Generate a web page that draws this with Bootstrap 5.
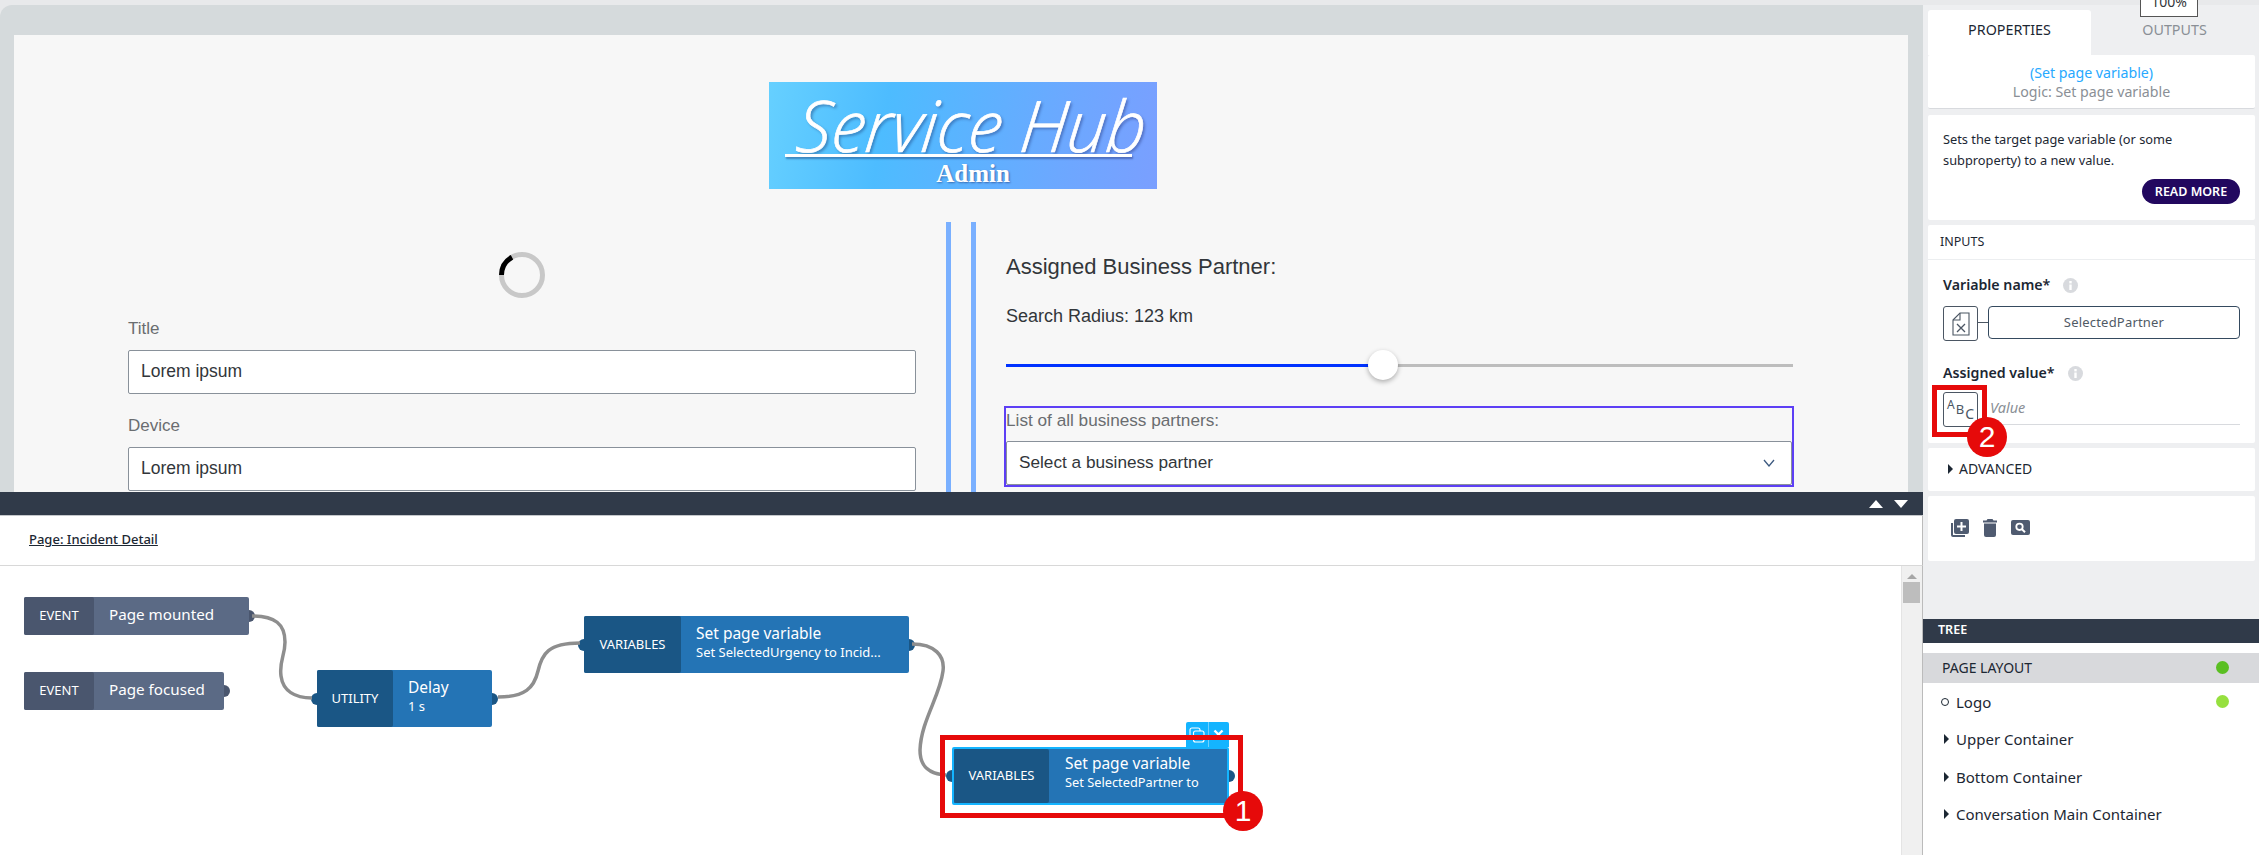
<!DOCTYPE html>
<html lang="en">
<head>
  <meta charset="UTF-8" />
  <title>Incident Detail</title>
  <link href="https://cdn.jsdelivr.net/npm/bootstrap@5.3.0/dist/css/bootstrap.min.css" rel="stylesheet" />
  <style>
    html, body { height: 100%; overflow: hidden; }
    body { font-family: "Noto Sans", "Liberation Sans", sans-serif; background: #e8e9eb; padding-top: 5px; color: #1c2733; }

    /* left side */
    .left-side { width: 1923px; }
    .stage { height: 487px; background: #d5dadc; border-top-left-radius: 12px; padding: 30px 15px 0 14px; overflow: hidden; }
    .stage-page { height: 457px; background: #f7f7f7; overflow: hidden; font-family: "Liberation Sans", sans-serif; }
    .logo-box { position: relative; width: 388px; height: 107px; margin: 47px 0 33px 755px; background: linear-gradient(100deg, #66d0ff 0%, #4dbcff 30%, #6ca8ff 75%, #7a9fff 100%); color: #fff; }
    .logo-main { position: absolute; left: 25px; top: 8px; font: italic 300 69px/70px "Open Sans", sans-serif; -webkit-text-stroke: .7px #fff; white-space: nowrap; transform-origin: left bottom; transform: skewX(-6deg) scaleY(1.03); text-shadow: 2px 2px 3px rgba(0,0,60,.35); }
    .logo-rule { position: absolute; left: 16px; top: 72px; width: 347px; height: 3px; background: #fff; box-shadow: 1px 2px 2px rgba(0,0,60,.35); }
    .logo-sub { position: absolute; left: 0; width: 100%; top: 78px; text-align: center; padding-left: 20px; font: bold 25px/28px "Liberation Serif", serif; text-shadow: 1px 1px 2px rgba(0,0,60,.4); }
    .form-side { width: 823px; margin-left: 114px; padding-right: 30px; border-right: 5px solid #7ab0ff; margin-right: 20px; }
    .partner-side { width: 823px; border-left: 5px solid #7ab0ff; padding-left: 30px; }
    .load-ring { display: block; margin: 30px auto 20px; }
    .page-label { font-size: 17px; line-height: 22px; color: #6a6d70; margin-bottom: 10px; }
    .page-input.form-control, .page-select.form-select { height: 44px; font-size: 17.5px; color: #32363a; border: 1px solid #89919a; border-radius: 2px; padding: 0 12px; background-color: #fff; box-shadow: none; }
    .page-input.form-control { margin-bottom: 21px; padding-bottom: 2px; }
    .partner-title { font-size: 22px; line-height: 28px; color: #32363a; margin: 31px 0 22px; }
    .radius-label { font-size: 18px; line-height: 26px; color: #32363a; margin-bottom: 21px; }
    .radius-range.form-range { display: block; width: 787px; height: 30px; margin-bottom: 26px; }
    .radius-range.form-range::-webkit-slider-runnable-track { height: 3px; border-radius: 0; background: linear-gradient(90deg, #0032ff 47.9%, #bdbdbd 47.9%); }
    .radius-range.form-range::-webkit-slider-thumb { width: 30px; height: 30px; margin-top: -13.5px; background: #fff; border: 0; box-shadow: 0 2px 5px rgba(0,0,0,.3); }
    .partner-pick { width: 790px; height: 81px; margin-left: -2px; border: 2px solid #5d3ff5; }
    .partner-pick label { display: block; font-size: 17.2px; line-height: 22px; color: #6a6d70; margin: 1px 0 10px; }
    .page-select.form-select { width: 786px; background-image: none; font-size: 17.2px; }
    .select-wrap { position: relative; }
    .select-wrap svg { position: absolute; right: 17px; top: 18px; }

    /* logic canvas */
    .logic-pane { height: 363px; background: #fff; position: relative; }
    .logic-bar { height: 24px; background: #303a49; border-bottom: 1px solid #c4c7cb; position: relative; }
    .logic-bar svg { position: absolute; top: 8px; }
    .arrow-up { left: 1869px; }
    .arrow-down { left: 1894px; }
    .logic-head { height: 50px; padding: 14px 0 0 29px; font-size: 13px; line-height: 18px; font-weight: 500; border-bottom: 1px solid #d8d8d8; border-right: 1px solid #bbb; }
    .logic-head a { color: #1c2733; }
    .logic-body { height: 289px; }
    .logic-canvas { position: relative; z-index: 0; flex: 1 1 auto; }
    .logic-scroll { width: 22px; background: #f0f0f0; border-left: 1px solid #e4e4e4; border-right: 1px solid #bbb; padding: 8px 2px 0 1px; }
    .logic-scroll i { display: block; width: 0; height: 0; margin: 0 auto 3px; border: 5px solid transparent; border-top: 0; border-bottom-color: #a6a6a6; }
    .logic-scroll b { display: block; height: 21px; background: #bdbdbd; }
    .wires { position: absolute; left: 0; top: 0; width: 1300px; height: 289px; }
    .wires path { fill: none; stroke: #8e8e8e; stroke-width: 3.5; }
    .flow-node { position: absolute; display: flex; color: #fff; border-radius: 2px; }
    .flow-node .kind { display: flex; align-items: center; justify-content: center; font-size: 13px; border-radius: 2px; }
    .flow-node .info { flex: 1 1 auto; min-width: 0; display: flex; flex-direction: column; justify-content: center; white-space: nowrap; padding-bottom: 5px; }
    .flow-node .ttl { font-size: 15.5px; line-height: 20px; }
    .flow-node .sub { font-size: 13px; line-height: 18px; }
    .node-event { height: 38px; background: #5b6a85; }
    .node-event .kind { width: 70px; background: #4a566e; }
    .node-event .info { padding-left: 15px; }
    .node-event .ttl { font-size: 15.2px; }
    .node-blue { background: #2474b5; }
    .node-blue .kind { background: #1a5685; }
    .flow-port { position: absolute; z-index: -1; width: 12px; height: 12px; border-radius: 50%; }
    .node-event .flow-port { background: #4a566e; right: -6px; top: 13px; }
    .node-blue .flow-port { background: #1a5685; top: calc(50% - 6px); }
    .flow-port.in { left: -6px; }
    .flow-port.out { right: -6px; }
    #n-mounted { left: 24px; top: 31px; width: 225px; }
    #n-focused { left: 24px; top: 106px; width: 200px; }
    #n-delay { left: 317px; top: 104px; width: 175px; height: 57px; }
    #n-delay .kind { width: 76px; }
    #n-delay .info { padding-left: 15px; }
    #n-urgency { left: 584px; top: 50px; width: 325px; height: 57px; }
    #n-urgency .kind { width: 97px; }
    #n-urgency .info { padding-left: 15px; }
    #n-partner { left: 952px; top: 181px; width: 277px; height: 58px; border: 2px solid #14b4ff; }
    #n-partner .kind { width: 95px; }
    #n-partner .info { padding-left: 16px; padding-bottom: 8px; }
    #n-partner .sub { font-size: 12.8px; }
    #n-partner .flow-port.in { left: -8px; }
    #n-partner .flow-port.out { right: -8px; }
    .node-tools { position: absolute; left: 1186px; top: 156px; width: 43px; height: 25px; background: #14b4ff; border-radius: 2px 2px 0 0; display: flex; }
    .node-tools span { flex: 1 1 50%; display: flex; align-items: center; justify-content: center; }
    .node-tools span + span { border-left: 1px solid #6ed0ff; }
    .mark-box { position: absolute; border: 5px solid #e60a0a; }
    .mark-num { position: absolute; width: 40px; height: 40px; border-radius: 50%; background: #e60a0a; color: #fff; font: 30px/40px "Liberation Sans", sans-serif; text-align: center; z-index: 5; }
    #box-one { left: 940px; top: 169px; width: 303px; height: 83px; }
    #num-one { left: 1223px; top: 225px; }
    #box-two { left: 4px; top: 160px; width: 55px; height: 52px; }
    #num-two { left: 39px; top: 192px; }

    /* right side */
    .right-side { width: 336px; background: #eeeff1; position: relative; font-size: 14px; }
    .zoom-tag { position: absolute; left: 217px; top: -14px; width: 58px; height: 26px; background: #fff; border: 1px solid #555; text-align: center; font-size: 14px; line-height: 19px; color: #32363a; z-index: 3; }
    .prop-tabs { padding: 5px 0 0 5px; height: 50px; }
    .prop-tab { width: 163px; height: 45px; text-align: center; font-size: 14.3px; line-height: 40px; color: #1c2733; }
    .prop-tab.on { background: #fff; border-radius: 3px 3px 0 0; }
    .prop-tab.off { color: #8a8f96; padding-left: 4px; }
    .prop-stack { padding: 0 4px 0 5px; }
    .prop-panel { background: #fff; margin-bottom: 5px; border-radius: 2px; }
    #p-title { height: 54px; margin-bottom: 6px; border-bottom: 1px solid #d8dade; text-align: center; font-size: 14.2px; line-height: 19px; padding-top: 8px; width: 327px; }
    #p-title div:first-child { color: #27a9ff; }
    #p-title div:last-child { color: #8a8f96; }
    #p-about { height: 105px; padding: 14px 15px 0; font-size: 12.8px; line-height: 20.5px; }
    .read-btn.btn { display: block; margin: 9px 0 0 auto; width: 98px; height: 25px; padding: 0; background: #22085f; border: 0; border-radius: 13px; color: #fff; font-size: 12.5px; font-weight: 600; line-height: 25px; }
    #p-inputs { height: 218px; position: relative; }
    .inputs-head { height: 35px; padding: 7px 0 0 12px; font-size: 12.5px; line-height: 20px; border-bottom: 1px solid #eceef0; }
    .inputs-body { padding: 15px 15px 0; }
    .field-name { display: flex; align-items: center; gap: 13px; font-size: 14.2px; font-weight: 600; line-height: 20px; }
    .field-name svg { flex: none; }
    .bind-row { display: flex; align-items: flex-start; margin-top: 11px; margin-bottom: 22px; }
    .bind-icon { width: 35px; height: 35px; flex: none; background: #fff; border: 1px solid #4b5663; border-radius: 3px; display: flex; align-items: center; justify-content: center; }
    .bind-link { width: 10px; height: 1px; background: #4b5663; margin-top: 16px; }
    .bind-field { flex: 1 1 auto; height: 33px; border: 1px solid #354a5f; border-radius: 4px; text-align: center; font-size: 13px; line-height: 31px; color: #505a65; letter-spacing: .2px; }
    .value-row { display: flex; margin-top: 9px; }
    .value-input { flex: 1 1 auto; margin-left: 7px; height: 33px; border-bottom: 1px solid #d8dade; color: #8a8f96; font-style: italic; font-size: 14.5px; line-height: 31px; padding-left: 5px; }
    .abc { line-height: 1; color: #4b5663; display: flex; align-items: flex-end; height: 22px; }
    .abc span:nth-child(1) { align-self: flex-start; font-size: 12px; }
    .abc span:nth-child(2) { align-self: center; margin: 0 1px; font-size: 13px; }
    .abc span:nth-child(3) { font-size: 14px; }
    #p-adv { height: 43px; display: flex; align-items: center; padding: 0 0 2px 20px; gap: 6px; font-size: 14px; }
    .tri-right { display: inline-block; width: 0; height: 0; border-style: solid; border-width: 5px 0 5px 5px; border-color: transparent transparent transparent #1c2733; }
    #p-tools { height: 65px; display: flex; align-items: center; padding: 0 0 2px 23px; gap: 14px; }
    .tree-bar { margin-top: auto; height: 24px; background: #303a49; color: #fff; font-size: 12.5px; font-weight: 600; line-height: 21px; padding-left: 15px; }
    .tree-list { height: 212px; background: #fff; padding-top: 10px; }
    .tree-item { display: flex; align-items: center; position: relative; padding: 0 0 2px 33px; height: 37.5px; font-size: 15px; }
    .tree-item .tri-right, .tree-item .dot-open { position: absolute; left: 21px; }
    .tree-item .dot-open { width: 8px; height: 8px; border: 1.5px solid #1c2733; border-radius: 50%; left: 18px; }
    .tree-head { height: 30px; padding-left: 19px; background: #d8d9dc; font-size: 14px; margin-bottom: 1px; }
    .tree-dot { position: absolute; left: 293px; width: 13px; height: 13px; border-radius: 50%; }
    .dot-dark { background: #5abf22; }
    .dot-light { background: #96e03f; }
  </style>
</head>
<body>
  <div class="d-flex">
    <div class="left-side">
      <div class="stage">
        <div class="stage-page">
          <div class="logo-box">
            <div class="logo-main">Service Hub</div>
            <div class="logo-rule"></div>
            <div class="logo-sub">Admin</div>
          </div>
          <div class="d-flex">
            <div class="form-side">
              <svg class="load-ring" width="46" height="46" viewBox="0 0 46 46">
                <circle cx="23" cy="23" r="20.5" fill="none" stroke="#c8c8c8" stroke-width="5" />
                <path d="M2.5 23A20.5 20.5 0 0 1 13 5.2" fill="none" stroke="#000" stroke-width="5" />
              </svg>
              <div class="page-label">Title</div>
              <input class="form-control page-input" value="Lorem ipsum" />
              <div class="page-label">Device</div>
              <input class="form-control page-input" value="Lorem ipsum" />
            </div>
            <div class="partner-side">
              <div class="partner-title">Assigned Business Partner:</div>
              <div class="radius-label">Search Radius: 123 km</div>
              <input type="range" class="form-range radius-range" min="0" max="100" value="47.8" step="0.1" />
              <div class="partner-pick">
                <label>List of all business partners:</label>
                <div class="select-wrap">
                  <select class="form-select page-select"><option>Select a business partner</option></select>
                  <svg width="12" height="8" viewBox="0 0 12 8"><path d="M1 1l5 6 5-6" fill="none" stroke="#3d5a80" stroke-width="1.3" /></svg>
                </div>
              </div>
            </div>
          </div>
        </div>
      </div>

      <div class="logic-pane">
        <div class="logic-bar">
          <svg class="arrow-up" width="14" height="8" viewBox="0 0 14 8"><path d="M0 8L7 0l7 8z" fill="#fff" /></svg>
          <svg class="arrow-down" width="14" height="8" viewBox="0 0 14 8"><path d="M0 0l7 8 7-8z" fill="#fff" /></svg>
        </div>
        <div class="logic-head"><a href="#">Page: Incident Detail</a></div>
        <div class="d-flex logic-body">
          <div class="logic-canvas">
            <svg class="wires" viewBox="0 0 1300 289">
              <path d="M252 50C275 50 285 58 285 76C285 90 279 95 281 110C283 125 295 132 312 132" />
              <path d="M498 131C525 131 534 122 538 105C542 88 548 77 580 77" />
              <path d="M912 78C935 78 945 90 943 105C940 130 921 155 920 184C920 200 928 208 946 209" />
            </svg>

            <div class="flow-node node-event" id="n-mounted">
              <div class="kind">EVENT</div>
              <div class="info"><div class="ttl">Page mounted</div></div>
              <span class="flow-port"></span>
            </div>
            <div class="flow-node node-event" id="n-focused">
              <div class="kind">EVENT</div>
              <div class="info"><div class="ttl">Page focused</div></div>
              <span class="flow-port"></span>
            </div>
            <div class="flow-node node-blue" id="n-delay">
              <span class="flow-port in"></span>
              <div class="kind">UTILITY</div>
              <div class="info"><div class="ttl">Delay</div><div class="sub">1 s</div></div>
              <span class="flow-port out"></span>
            </div>
            <div class="flow-node node-blue" id="n-urgency">
              <span class="flow-port in"></span>
              <div class="kind">VARIABLES</div>
              <div class="info"><div class="ttl">Set page variable</div><div class="sub">Set SelectedUrgency to Incid...</div></div>
              <span class="flow-port out"></span>
            </div>
            <div class="flow-node node-blue" id="n-partner">
              <span class="flow-port in"></span>
              <div class="kind">VARIABLES</div>
              <div class="info"><div class="ttl">Set page variable</div><div class="sub">Set SelectedPartner to</div></div>
              <span class="flow-port out"></span>
            </div>
            <div class="node-tools">
              <span><svg width="16" height="16" viewBox="0 0 16 16" fill="none" stroke="#fff" stroke-width="1.1"><rect x="1" y="1" width="10" height="10" rx="2" /><rect x="4.500" y="4" width="10.500" height="11" rx="2" fill="#14b4ff" /></svg></span>
              <span><svg width="11" height="11" viewBox="0 0 11 11" fill="none" stroke="#fff" stroke-width="2.4"><path d="M1.500 1.500l8 8M9.500 1.500l-8 8" /></svg></span>
            </div>
            <div class="mark-box" id="box-one"></div>
            <div class="mark-num" id="num-one">1</div>
          </div>
          <div class="logic-scroll"><i></i><b></b></div>
        </div>
      </div>
    </div>

    <div class="right-side d-flex flex-column">
      <div class="zoom-tag">100%</div>
      <div class="prop-tabs d-flex">
        <div class="prop-tab on">PROPERTIES</div>
        <div class="prop-tab off">OUTPUTS</div>
      </div>
      <div class="prop-stack">
        <div class="prop-panel" id="p-title">
          <div>(Set page variable)</div>
          <div>Logic: Set page variable</div>
        </div>
        <div class="prop-panel" id="p-about">
          Sets the target page variable (or some subproperty) to a new value.
          <button class="btn read-btn">READ MORE</button>
        </div>
        <div class="prop-panel" id="p-inputs">
          <div class="inputs-head">INPUTS</div>
          <div class="inputs-body">
            <div class="field-name">Variable name*
              <svg width="15" height="15" viewBox="0 0 15 15"><circle cx="7.500" cy="7.500" r="7.500" fill="#d8dade" /><rect x="6.300" y="6.500" width="2.400" height="5.500" fill="#fff" /><rect x="6.300" y="3" width="2.400" height="2.400" fill="#fff" /></svg>
            </div>
            <div class="bind-row">
              <div class="bind-icon">
                <svg width="18" height="24" viewBox="0 0 18 24" fill="none" stroke="#4b5663" stroke-width="1.1"><path d="M1 8L8 1h9v22H1z" /><path d="M8 1v7H1" /><path d="M5 12l8 8M13 12l-8 8" stroke-width="1.300" /></svg>
              </div>
              <div class="bind-link"></div>
              <div class="bind-field">SelectedPartner</div>
            </div>
            <div class="field-name">Assigned value*
              <svg width="15" height="15" viewBox="0 0 15 15"><circle cx="7.500" cy="7.500" r="7.500" fill="#d8dade" /><rect x="6.300" y="6.500" width="2.400" height="5.500" fill="#fff" /><rect x="6.300" y="3" width="2.400" height="2.400" fill="#fff" /></svg>
            </div>
            <div class="value-row">
              <div class="bind-icon"><div class="abc"><span>A</span><span>B</span><span>C</span></div></div>
              <div class="value-input">Value</div>
            </div>
          </div>
          <div class="mark-box" id="box-two"></div>
          <div class="mark-num" id="num-two">2</div>
        </div>
        <div class="prop-panel" id="p-adv"><span class="tri-right"></span>ADVANCED</div>
        <div class="prop-panel" id="p-tools">
          <svg width="18" height="18" viewBox="0 0 18 18" fill="#4f5b70"><path d="M0 4h2v12h12v2H2a2 2 0 0 1-2-2z" /><path d="M5 0h11a2 2 0 0 1 2 2v11a2 2 0 0 1-2 2H5a2 2 0 0 1-2-2V2a2 2 0 0 1 2-2z" /><path d="M9.500 3h2v3.500H15v2h-3.500V12h-2V8.500H6v-2h3.500z" fill="#fff" /></svg>
          <svg width="14" height="18" viewBox="0 0 14 18" fill="#4f5b70"><path d="M4.500 0h5l1 1.500H14v2H0v-2h3.500z" /><path d="M1 4.500h12V16a2 2 0 0 1-2 2H3a2 2 0 0 1-2-2z" /></svg>
          <svg width="19" height="15" viewBox="0 0 19 15"><rect width="19" height="15" rx="2" fill="#4f5b70" /><circle cx="8.500" cy="6.800" r="3.200" fill="none" stroke="#fff" stroke-width="1.800" /><path d="M11 9.300l3 3" stroke="#fff" stroke-width="2" /></svg>
        </div>
      </div>
      <div class="tree-bar">TREE</div>
      <div class="tree-list">
        <div class="tree-item tree-head">PAGE LAYOUT<span class="tree-dot dot-dark"></span></div>
        <div class="tree-item"><span class="dot-open"></span>Logo<span class="tree-dot dot-light"></span></div>
        <div class="tree-item"><span class="tri-right"></span>Upper Container</div>
        <div class="tree-item"><span class="tri-right"></span>Bottom Container</div>
        <div class="tree-item"><span class="tri-right"></span>Conversation Main Container</div>
      </div>
    </div>
  </div>
  <script src="https://cdn.jsdelivr.net/npm/bootstrap@5.3.0/dist/js/bootstrap.bundle.min.js"></script>
</body>
</html>
